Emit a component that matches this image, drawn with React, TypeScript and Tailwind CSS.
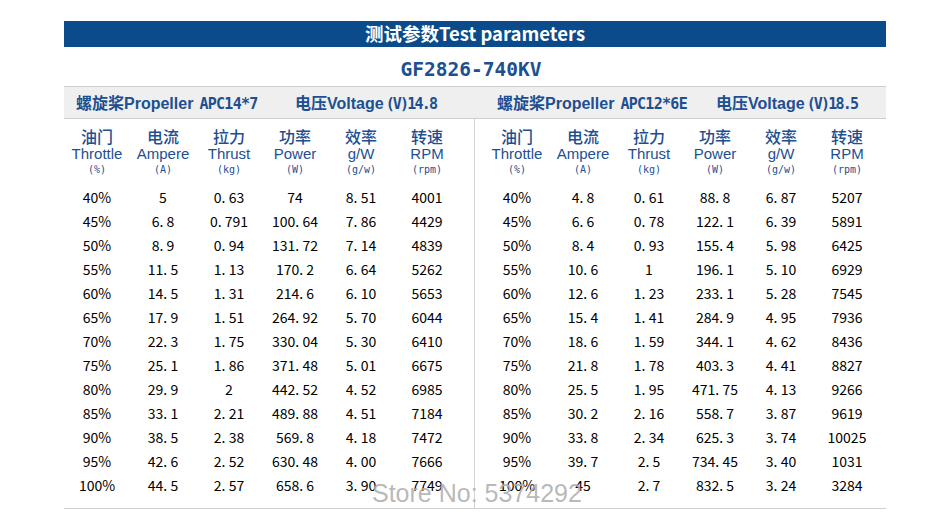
const cn = "font-['Noto_Sans_CJK_SC',sans-serif]";
const ar = "font-['Liberation_Sans','Noto_Sans_CJK_SC',sans-serif]";
const mono = "font-['DejaVu_Sans_Mono',monospace]";

const heads = [
  ['油门', 'Throttle', '(%)'],
  ['电流', 'Ampere', '(A)'],
  ['拉力', 'Thrust', '(kg)'],
  ['功率', 'Power', '(W)'],
  ['效率', 'g/W', '(g/w)'],
  ['转速', 'RPM', '(rpm)'],
];

const left = [
  ['40%', '5', '0. 63', '74', '8. 51', '4001'],
  ['45%', '6. 8', '0. 791', '100. 64', '7. 86', '4429'],
  ['50%', '8. 9', '0. 94', '131. 72', '7. 14', '4839'],
  ['55%', '11. 5', '1. 13', '170. 2', '6. 64', '5262'],
  ['60%', '14. 5', '1. 31', '214. 6', '6. 10', '5653'],
  ['65%', '17. 9', '1. 51', '264. 92', '5. 70', '6044'],
  ['70%', '22. 3', '1. 75', '330. 04', '5. 30', '6410'],
  ['75%', '25. 1', '1. 86', '371. 48', '5. 01', '6675'],
  ['80%', '29. 9', '2', '442. 52', '4. 52', '6985'],
  ['85%', '33. 1', '2. 21', '489. 88', '4. 51', '7184'],
  ['90%', '38. 5', '2. 38', '569. 8', '4. 18', '7472'],
  ['95%', '42. 6', '2. 52', '630. 48', '4. 00', '7666'],
  ['100%', '44. 5', '2. 57', '658. 6', '3. 90', '7749'],
];

const right = [
  ['40%', '4. 8', '0. 61', '88. 8', '6. 87', '5207'],
  ['45%', '6. 6', '0. 78', '122. 1', '6. 39', '5891'],
  ['50%', '8. 4', '0. 93', '155. 4', '5. 98', '6425'],
  ['55%', '10. 6', '1', '196. 1', '5. 10', '6929'],
  ['60%', '12. 6', '1. 23', '233. 1', '5. 28', '7545'],
  ['65%', '15. 4', '1. 41', '284. 9', '4. 95', '7936'],
  ['70%', '18. 6', '1. 59', '344. 1', '4. 62', '8436'],
  ['75%', '21. 8', '1. 78', '403. 3', '4. 41', '8827'],
  ['80%', '25. 5', '1. 95', '471. 75', '4. 13', '9266'],
  ['85%', '30. 2', '2. 16', '558. 7', '3. 87', '9619'],
  ['90%', '33. 8', '2. 34', '625. 3', '3. 74', '10025'],
  ['95%', '39. 7', '2. 5', '734. 45', '3. 40', '1031'],
  ['100%', '45', '2. 7', '832. 5', '3. 24', '3284'],
];

const PropBand = ({ prop, volt, pad }: { prop: string; volt: string; pad: string }) => (
  <div className={`flex items-center h-full ${pad} text-[#1d4f91]`}>
    <div className="w-[219px] flex items-baseline">
      <span className={`${cn} text-[16px] font-bold`}>螺旋桨</span>
      <span className={`${ar} text-[16px] font-bold`}>Propeller</span>
      <span className={`${mono} text-[15px] font-semibold tracking-[-0.7px] ml-[6px]`}>{prop}</span>
    </div>
    <div className="flex items-baseline">
      <span className={`${cn} text-[16px] font-bold`}>电压</span>
      <span className={`${ar} text-[16px] font-bold`}>Voltage</span>
      <span className={`${mono} text-[15px] font-semibold tracking-[-1.8px] ml-[2px]`}>(V){volt}</span>
    </div>
  </div>
);

const Table = ({ rows, pad }: { rows: string[][]; pad: string }) => (
  <div className={`flex flex-col ${pad}`}>
    <div className="grid grid-cols-[repeat(6,66px)] pt-[8px] text-[#1d4f91]">
      {heads.map((h) => (
        <div key={h[1]} className="flex flex-col items-center">
          <span className={`${cn} text-[16px] leading-[18px] font-medium`}>{h[0]}</span>
          <span className={`${ar} text-[15px] leading-[18px]`}>{h[1]}</span>
          <span className={`${mono} text-[10px] leading-[14px]`}>{h[2]}</span>
        </div>
      ))}
    </div>
    <div className="flex flex-col pt-[8px]">
      {rows.map((r) => (
        <div key={r[0]} className="grid grid-cols-[repeat(6,66px)] h-[24px] items-center">
          {r.map((v, i) => (
            <span key={i} className={`${cn} text-[14px] text-black text-center whitespace-pre`}>
              {v}
            </span>
          ))}
        </div>
      ))}
    </div>
  </div>
);

export default function App() {
  return (
    <div className="w-[950px] h-[516px] bg-white relative overflow-hidden">
      <div className="w-[822px] ml-[64px] pt-[21px] flex flex-col">
        <div className="h-[26px] bg-[#0b4b8c] flex items-center justify-center">
          <span className={`${cn} text-white text-[18.5px] font-bold`}>测试参数Test parameters</span>
        </div>
        <div className="h-[39px] flex items-center justify-center pt-[6px] pr-[8px]">
          <span className={`${mono} text-[19.5px] text-[#1d4f91] font-bold`}>GF2826-740KV</span>
        </div>
        <div className="h-[33px] bg-[#efefef] border-t border-b border-[#cfcfcf] grid grid-cols-[410px_412px]">
          <PropBand prop="APC14*7" volt="14.8" pad="pl-[12px]" />
          <PropBand prop="APC12*6E" volt="18.5" pad="pl-[23px]" />
        </div>
        <div className="h-[390px] border-b border-[#cfcfcf] grid grid-cols-[410px_412px]">
          <Table rows={left} pad="pl-0" />
          <div className="border-l border-[#d4d4d4]">
            <Table rows={right} pad="pl-[9px]" />
          </div>
        </div>
      </div>
      <div className={`${ar} absolute left-[372px] top-[478px] text-[25px] text-[#b0b0b0]/90 leading-[30px]`}>
        Store No: 5374292
      </div>
    </div>
  );
}
